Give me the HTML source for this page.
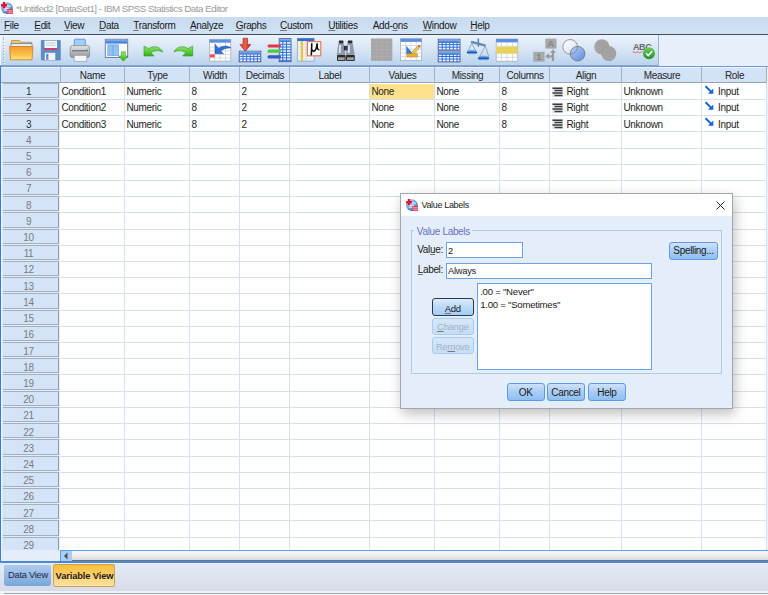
<!DOCTYPE html><html><head><meta charset="utf-8"><style>
*{margin:0;padding:0;box-sizing:border-box}
html,body{width:768px;height:595px;overflow:hidden;background:#fff;font-family:"Liberation Sans", sans-serif;font-size:10px;letter-spacing:-0.33px;color:#1e1e1e}
.a{position:absolute}
.t{position:absolute;white-space:nowrap;line-height:1}
u{text-decoration:underline;text-decoration-color:#777;text-underline-offset:1px}

</style></head><body>
<div class="a" style="left:0;top:0;width:768px;height:17px;background:#fff"></div>
<svg class="a" style="left:0;top:0" width="16" height="16" viewBox="0 0 16 16">
<defs><radialGradient id="tiG" cx="0.35" cy="0.3" r="0.75"><stop offset="0" stop-color="#c4e0f6"/><stop offset="0.6" stop-color="#6fa3da"/><stop offset="1" stop-color="#2f6ab8"/></radialGradient></defs>
<circle cx="6.9" cy="8.1" r="5.9" fill="url(#tiG)"/>
<path d="M6 6.2h5M4 8.4h5M4 10.2h3.5" stroke="#eaf3fb" stroke-width="0.9"/>
<path d="M1.1 4h5.9v2.4H1.1z M2.8 1.9h2.4v6.4H2.8z" fill="#e0143c"/>
<rect x="7.3" y="8.9" width="5.6" height="5.1" fill="#dc3050"/>
<path d="M7.3 10.6h5.6M7.3 12.3h5.6M9.2 9.8v4.2M11 9.8v4.2" stroke="#f3b8c4" stroke-width="0.6"/>
</svg>
<div class="t" style="left:16px;top:3.7px;font-size:9.8px;letter-spacing:-0.52px;color:#9c9c9c">*Untitled2 [DataSet1] - IBM SPSS Statistics Data Editor</div>
<div class="a" style="left:0;top:17px;width:768px;height:17px;background:linear-gradient(#c9dbf0,#d0e1f4)"></div>
<div class="a" style="left:0;top:34px;width:768px;height:1px;background:#454d58"></div>
<div class="t" style="left:4.0px;top:21.1px;color:#1a1a1a"><u>F</u>ile</div>
<div class="t" style="left:34.3px;top:21.1px;color:#1a1a1a"><u>E</u>dit</div>
<div class="t" style="left:64.0px;top:21.1px;color:#1a1a1a"><u>V</u>iew</div>
<div class="t" style="left:99.0px;top:21.1px;color:#1a1a1a"><u>D</u>ata</div>
<div class="t" style="left:133.3px;top:21.1px;color:#1a1a1a"><u>T</u>ransform</div>
<div class="t" style="left:190.0px;top:21.1px;color:#1a1a1a"><u>A</u>nalyze</div>
<div class="t" style="left:235.7px;top:21.1px;color:#1a1a1a"><u>G</u>raphs</div>
<div class="t" style="left:280.0px;top:21.1px;color:#1a1a1a"><u>C</u>ustom</div>
<div class="t" style="left:328.3px;top:21.1px;color:#1a1a1a"><u>U</u>tilities</div>
<div class="t" style="left:372.7px;top:21.1px;color:#1a1a1a">Add-<u>o</u>ns</div>
<div class="t" style="left:422.7px;top:21.1px;color:#1a1a1a"><u>W</u>indow</div>
<div class="t" style="left:470.3px;top:21.1px;color:#1a1a1a"><u>H</u>elp</div>
<div class="a" style="left:0;top:35px;width:768px;height:31px;background:#e6effa"></div>
<div class="a" style="left:0;top:35px;width:659px;height:30px;background:linear-gradient(#ecf3fb,#d4e3f4 55%,#b9d3ee);border-right:1px solid #9fb3cb"></div>
<div class="a" style="left:0;top:65px;width:659px;height:1px;background:#8ba6c6"></div>
<div class="a" style="left:0;top:35px;width:1px;height:30px;background:#f2f5f9"></div>
<div class="a" style="left:3px;top:36.5px;width:1px;height:1px;background:#98a6b6;box-shadow:1px 1px 0 #f4f8fc"></div>
<div class="a" style="left:3px;top:39.4px;width:1px;height:1px;background:#98a6b6;box-shadow:1px 1px 0 #f4f8fc"></div>
<div class="a" style="left:3px;top:42.2px;width:1px;height:1px;background:#98a6b6;box-shadow:1px 1px 0 #f4f8fc"></div>
<div class="a" style="left:3px;top:45.0px;width:1px;height:1px;background:#98a6b6;box-shadow:1px 1px 0 #f4f8fc"></div>
<div class="a" style="left:3px;top:47.9px;width:1px;height:1px;background:#98a6b6;box-shadow:1px 1px 0 #f4f8fc"></div>
<div class="a" style="left:3px;top:50.8px;width:1px;height:1px;background:#98a6b6;box-shadow:1px 1px 0 #f4f8fc"></div>
<div class="a" style="left:3px;top:53.6px;width:1px;height:1px;background:#98a6b6;box-shadow:1px 1px 0 #f4f8fc"></div>
<div class="a" style="left:3px;top:56.5px;width:1px;height:1px;background:#98a6b6;box-shadow:1px 1px 0 #f4f8fc"></div>
<div class="a" style="left:3px;top:59.3px;width:1px;height:1px;background:#98a6b6;box-shadow:1px 1px 0 #f4f8fc"></div>
<div class="a" style="left:3px;top:62.2px;width:1px;height:1px;background:#98a6b6;box-shadow:1px 1px 0 #f4f8fc"></div>
<svg class="a" style="left:0;top:0" width="768" height="66" viewBox="0 0 768 66">
<defs>
<linearGradient id="gFold" x1="0" y1="0" x2="0" y2="1"><stop offset="0" stop-color="#f59a2e"/><stop offset="0.6" stop-color="#fbc14c"/><stop offset="1" stop-color="#fde878"/></linearGradient>
<linearGradient id="gFoldB" x1="0" y1="0" x2="0" y2="1"><stop offset="0" stop-color="#fbd35c"/><stop offset="1" stop-color="#f0a030"/></linearGradient>
<linearGradient id="gGreen" x1="0" y1="0" x2="0" y2="1"><stop offset="0" stop-color="#8ee86a"/><stop offset="1" stop-color="#35b01c"/></linearGradient>
<linearGradient id="gBlueH" x1="0" y1="0" x2="0" y2="1"><stop offset="0" stop-color="#86b6f2"/><stop offset="1" stop-color="#2f6fd4"/></linearGradient>
<linearGradient id="gRed" x1="0" y1="0" x2="1" y2="0"><stop offset="0" stop-color="#e0302a"/><stop offset="0.5" stop-color="#f06050"/><stop offset="1" stop-color="#b01810"/></linearGradient>
<linearGradient id="gPrint" x1="0" y1="0" x2="0" y2="1"><stop offset="0" stop-color="#e8e8e8"/><stop offset="0.5" stop-color="#b9bcc0"/><stop offset="1" stop-color="#8d9196"/></linearGradient>
<linearGradient id="gC1" x1="0" y1="0" x2="1" y2="1"><stop offset="0" stop-color="#ffffff"/><stop offset="1" stop-color="#d6e0f2"/></linearGradient>
<linearGradient id="gC2" x1="0" y1="0" x2="1" y2="1"><stop offset="0" stop-color="#b4cdf5"/><stop offset="1" stop-color="#4f82e0"/></linearGradient>
<linearGradient id="gChk" x1="0" y1="0" x2="0" y2="1"><stop offset="0" stop-color="#6ccf5a"/><stop offset="1" stop-color="#21922a"/></linearGradient>
<linearGradient id="gPan" x1="0" y1="0" x2="0" y2="1"><stop offset="0" stop-color="#7fbaea"/><stop offset="0.5" stop-color="#3a7ad0"/><stop offset="1" stop-color="#d8f0fc"/></linearGradient>
</defs>
<!-- 1 open folder -->
<path d="M11.5 40.5h8l1.2 1.8h10.8v5h-20z" fill="url(#gFoldB)" stroke="#c98a32" stroke-width="0.8"/>
<rect x="11" y="43.5" width="21" height="3.5" fill="#dfeefa" stroke="#5a88c8" stroke-width="0.8"/>
<path d="M9.5 46.5h23.5l-1 13.3h-21.5z" fill="url(#gFold)" stroke="#d3842e" stroke-width="0.9"/>
<!-- 2 save -->
<path d="M41.3 40.5h19v19.5h-18.5l-0.5-0.5z" fill="#5a8dc6" stroke="#4a78b0" stroke-width="0.6"/>
<rect x="44.5" y="40.7" width="12.5" height="7.3" fill="#f4f7fb"/>
<path d="M46 43h9.5M46 45.3h9.5" stroke="#9aa7b6" stroke-width="0.6"/>
<rect x="44.5" y="48" width="12.5" height="1.8" fill="#d93a5e"/>
<rect x="44.8" y="52.8" width="10.5" height="7.2" fill="#f2f2f2"/>
<rect x="46.2" y="53.8" width="2.2" height="6" fill="#5a8dc6"/>
<!-- 3 printer -->
<rect x="74.3" y="39.2" width="11" height="7.5" rx="1" fill="#9fd0f8" stroke="#4b8ad6" stroke-width="0.8"/>
<rect x="70.2" y="45.6" width="19.4" height="12" rx="2.5" fill="url(#gPrint)" stroke="#7d8186" stroke-width="0.7"/>
<rect x="72" y="50.2" width="16" height="1.2" fill="#6d7176"/>
<circle cx="87.3" cy="49.8" r="0.8" fill="#2fd04a"/>
<rect x="74.2" y="55.3" width="12.6" height="6" fill="#f4f6f8" stroke="#9aa0a8" stroke-width="0.7"/>
<!-- 4 dialog recall -->
<rect x="105.3" y="39.3" width="22.4" height="18.2" fill="#fafcff" stroke="#6a6f9c" stroke-width="0.9"/>
<rect x="105.7" y="39.7" width="21.6" height="3.8" fill="url(#gBlueH)"/>
<rect x="107.8" y="44.8" width="4.6" height="11" fill="#8fc2ef" stroke="#5d9ee0" stroke-width="0.6"/>
<rect x="113" y="44.8" width="5.5" height="11" fill="#8fc2ef" stroke="#5d9ee0" stroke-width="0.6"/>
<path d="M121.2 51.8h4.2v4.2h2.6l-4.7 5.2-4.7-5.2h2.6z" fill="url(#gGreen)" stroke="#2a9a18" stroke-width="0.5"/>
<!-- 5 undo -->
<path d="M144 46L144 56L154 56L151 52.8C153.5 50.5 158 49.8 162.8 52C160.5 47.2 154.5 44.6 148.8 48.6Z" fill="url(#gGreen)" stroke="#2e9a1c" stroke-width="0.6" stroke-linejoin="round"/>
<!-- 6 redo -->
<path d="M192.7 46L192.7 56L182.7 56L185.7 52.8C183.2 50.5 178.7 49.8 173.9 52C176.2 47.2 182.2 44.6 187.9 48.6Z" fill="url(#gGreen)" stroke="#2e9a1c" stroke-width="0.6" stroke-linejoin="round"/>
<!-- 7 goto case -->
<rect x="209.5" y="39.5" width="21.3" height="21.6" fill="#fdfdfd" stroke="#9fa6ae" stroke-width="0.7"/>
<rect x="209.5" y="39.5" width="21.3" height="3.2" fill="#5c8fe0"/>
<path d="M209.5 47h21.3M209.5 50.8h21.3M209.5 54.4h21.3M209.5 58h21.3M214.8 42.7v18.4M220 42.7v18.4M225.5 42.7v18.4" stroke="#c9ced4" stroke-width="0.7"/>
<rect x="209.8" y="54.4" width="5" height="3" fill="#ef4a5a"/>
<path d="M215 44.2v9.5h8.5l-2.6-2.5c2.5-2.5 6-3.5 10.2-3.2-3.5-2.5-8-2.6-12.5 0.2l-3.6-4z" fill="#2f6fd4" stroke="#1e56b0" stroke-width="0.5"/>
<!-- 8 insert cases -->
<path d="M243 38.2h4.6v6.2h3.2l-5.5 7-5.5-7h3.2z" fill="url(#gRed)" stroke="#9a1a10" stroke-width="0.5"/>
<rect x="239.2" y="51.2" width="21.6" height="10.6" fill="#f4f8fd" stroke="#283c80" stroke-width="0.8"/>
<rect x="239.6" y="51.6" width="20.8" height="3" fill="url(#gBlueH)"/>
<path d="M239.5 56.4h21M239.5 59h21M243 54.6v7M246.6 54.6v7M250.2 54.6v7M253.8 54.6v7M257.4 54.6v7" stroke="#2f6fd4" stroke-width="1"/>
<!-- 9 insert variable -->
<rect x="279.2" y="38.7" width="11.8" height="23" fill="#e6f0fc" stroke="#2a3f8a" stroke-width="0.8"/>
<rect x="279.6" y="39.1" width="11" height="3" fill="url(#gBlueH)"/>
<path d="M282.8 42v19.5M286.5 42v19.5M279.5 44.3h11.5M279.5 47h11.5M279.5 49.7h11.5M279.5 52.4h11.5M279.5 55.1h11.5M279.5 57.8h11.5M279.5 60.3h11.5" stroke="#2f73d8" stroke-width="1"/>
<rect x="267.5" y="44.4" width="13.5" height="3.2" rx="1.5" fill="#e2344e"/>
<rect x="267.5" y="49.5" width="13.5" height="3.2" rx="1.5" fill="#4ccc3c"/>
<rect x="267.5" y="55.3" width="13.5" height="3.2" rx="1.5" fill="#3d55c8"/>
<!-- 10 mu -->
<rect x="297.3" y="38.3" width="16.8" height="22.8" fill="#f7f9fc" stroke="#7a90b8" stroke-width="0.7"/>
<rect x="297.5" y="38.3" width="16.6" height="2.8" fill="#2f6fd4"/>
<rect x="300.7" y="41.1" width="2.4" height="20" fill="#f2c21e"/>
<path d="M297.5 44h16.6M297.5 47h16.6M297.5 50h16.6M297.5 53h16.6M297.5 56h16.6M297.5 59h16.6M306 41v20" stroke="#c8ced8" stroke-width="0.7"/>
<rect x="307.4" y="41.6" width="13.4" height="14.2" fill="#fff" stroke="#ec7a50" stroke-width="1.2"/>
<path d="M311.8 43.8L311.3 54.8M311.6 48.5Q312 51.6 314.2 51.1Q316.4 50.2 317.1 43.8M317.1 44.2Q317.1 49.6 318.8 49.7" stroke="#111" stroke-width="1.6" fill="none" stroke-linecap="round"/>
<!-- 11 binoculars -->
<rect x="338.8" y="40.5" width="4.6" height="3.2" rx="0.6" fill="#2b2b2b"/>
<rect x="347.8" y="40.5" width="4.6" height="3.2" rx="0.6" fill="#2b2b2b"/>
<path d="M338.3 43.5h5.6l1.6 11.8h-8.8z" fill="#8e9aaa"/>
<path d="M347.3 43.5h5.6l1.8 11.8h-8.8z" fill="#8e9aaa"/>
<path d="M339.3 45h1.6l-0.3 8h-1.9z" fill="#e4eaf2"/>
<path d="M348.3 45h1.6l-0.3 8h-1.9z" fill="#e4eaf2"/>
<rect x="343.8" y="45.8" width="3.6" height="4.6" fill="#2a3040"/>
<rect x="346.6" y="46.2" width="0.8" height="3.8" fill="#3a50c0"/>
<rect x="337" y="55" width="8.6" height="6" rx="0.8" fill="#2b2b2b"/>
<rect x="346" y="55" width="8.8" height="6" rx="0.8" fill="#2b2b2b"/>
<rect x="338" y="57.3" width="6.6" height="2.8" fill="#a0a0a0"/>
<rect x="347" y="57.3" width="6.8" height="2.8" fill="#a0a0a0"/>
<!-- 12 gray grid -->
<rect x="371" y="38.5" width="21.3" height="22.3" fill="#a6a6a6"/>
<path d="M371 42.5h21.3M371 46h21.3M371 49.5h21.3M371 53h21.3M371 56.5h21.3M376.5 38.5v22.3M382 38.5v22.3M387 38.5v22.3" stroke="#b2b2b2" stroke-width="0.6"/>
<!-- 13 edit grid pencil -->
<rect x="400.5" y="38.7" width="21.2" height="21.8" fill="#fdfdfd" stroke="#9fa6ae" stroke-width="0.7"/>
<rect x="400.5" y="38.7" width="21.2" height="3.2" fill="#5c8fe0"/>
<path d="M400.5 45.5h21.2M400.5 49.2h21.2M400.5 52.8h21.2M400.5 56.5h21.2M405.7 42v18.5M411 42v18.5M416.3 42v18.5" stroke="#c9ced4" stroke-width="0.7"/>
<path d="M406.3 45.8v8.5h7z" fill="#3a78d8"/>
<path d="M411.5 52.5l6.5-6.8 1.8 1.8-6.5 6.8-2.6 0.8z" fill="#f2c84a" stroke="#8a6a2a" stroke-width="0.5"/>
<circle cx="419.3" cy="46.1" r="1.2" fill="#e05a5a"/>
<rect x="407" y="53.8" width="10.4" height="3.2" fill="#e8b030" stroke="#b08020" stroke-width="0.5"/>
<!-- 14 two tables -->
<rect x="438.2" y="39.2" width="21.8" height="10.8" fill="#f4f8fd" stroke="#283c80" stroke-width="0.8"/>
<rect x="438.6" y="39.6" width="21" height="3.4" fill="url(#gBlueH)"/>
<path d="M438.5 44.6h21.5M438.5 47.2h21.5M442.3 43v7M446 43v7M449.7 43v7M453.3 43v7M457 43v7" stroke="#2f6fd4" stroke-width="1"/>
<rect x="438.2" y="51.1" width="21.8" height="10.8" fill="#f4f8fd" stroke="#283c80" stroke-width="0.8"/>
<rect x="438.6" y="51.5" width="21" height="3.4" fill="url(#gBlueH)"/>
<path d="M438.5 56.5h21.5M438.5 59.1h21.5M442.3 55v7M446 55v7M449.7 55v7M453.3 55v7M457 55v7" stroke="#2f6fd4" stroke-width="1"/>
<!-- 15 scales -->
<rect x="477.6" y="38.5" width="1.5" height="8.2" fill="#4f82ac"/>
<path d="M471 41.8l14.6 3.8" stroke="#5a8ab2" stroke-width="2.4"/>
<path d="M471.8 43.5l-4.6 8.8M471.8 43.5l4.8 8.8M485.3 46l-6.3 11.8M485.3 46l3.8 11.8" stroke="#7090ae" stroke-width="0.7"/>
<ellipse cx="472" cy="52.5" rx="5.2" ry="2.7" fill="url(#gPan)"/>
<path d="M467.2 52.5h9.6" stroke="#1a50b0" stroke-width="1.2"/>
<ellipse cx="483.5" cy="58.4" rx="5.5" ry="3" fill="url(#gPan)"/>
<path d="M478.3 58.4h10.4" stroke="#1a50b0" stroke-width="1.3"/>
<!-- 16 yellow grid -->
<rect x="496.2" y="39" width="21.6" height="22.2" fill="#fdfdfd" stroke="#9fa6ae" stroke-width="0.7"/>
<rect x="496.2" y="39" width="21.6" height="3.4" fill="#5c8fe0"/>
<rect x="496.6" y="46.6" width="20.8" height="6.8" fill="#f7d22a"/>
<path d="M496.2 46.3h21.6M496.2 50h21.6M496.2 53.6h21.6M496.2 57.3h21.6M501.5 42.4v18.8M507 42.4v18.8M512.5 42.4v18.8" stroke="#c9ced4" stroke-width="0.7"/>
<!-- 17 value labels -->
<rect x="545.3" y="38.6" width="11.2" height="10" fill="#a8a8a8"/>
<text x="547.2" y="47.3" font-family="Liberation Sans" font-weight="bold" font-size="9.5" fill="#858585">A</text>
<rect x="533.2" y="51.8" width="11.4" height="9.9" fill="#a8a8a8"/>
<text x="536.2" y="60.3" font-family="Liberation Sans" font-weight="bold" font-size="9.5" fill="#858585">1</text>
<path d="M547.5 56.3h5.5M553 61v-9.5" stroke="#9a9a9a" stroke-width="2.2" fill="none"/>
<path d="M545.3 56.3l3.5-3v6z M553 49.3l-3 3.5h6z" fill="#9a9a9a"/>
<!-- 18 circles -->
<circle cx="570.2" cy="46.8" r="7.3" fill="url(#gC1)"/>
<circle cx="577.6" cy="53.7" r="7.3" fill="url(#gC2)" fill-opacity="0.9"/>
<circle cx="570.2" cy="46.8" r="7.3" fill="none" stroke="#808080" stroke-width="0.8"/>
<circle cx="577.6" cy="53.7" r="7.3" fill="none" stroke="#707070" stroke-width="0.8"/>
<!-- 19 gray circles -->
<circle cx="601.9" cy="46.9" r="7.6" fill="#a3a3a3"/>
<circle cx="608.8" cy="53.6" r="7.5" fill="#a3a3a3"/><path d="M601.5 54.5A7.5 7.5 0 0 1 609.5 46.1" stroke="#989898" stroke-width="0.6" fill="none"/>
<!-- 20 ABC -->
<text x="633" y="49.6" font-family="Liberation Sans" font-size="9" font-weight="bold" fill="#6a6a6a" letter-spacing="-0.4">ABC</text>
<path d="M632.5 52.3q1 -1 2 0t2 0t2 0t2 0t2 0" stroke="#e04a3a" stroke-width="0.8" fill="none"/>
<circle cx="649" cy="53.3" r="6" fill="url(#gChk)"/>
<path d="M646 53.2l2.2 2.3 4-4.2" stroke="#fff" stroke-width="1.6" fill="none"/>
</svg>

<div class="a" style="left:0;top:66px;width:768px;height:497px;background:#fff"></div>
<div class="a" style="left:0;top:66px;width:768px;height:1px;background:#6a9bd8"></div>
<div class="a" style="left:0;top:66px;width:1.5px;height:497px;background:#3e7fcf"></div>
<div class="a" style="left:767px;top:67px;width:1px;height:483px;background:#eef3f9"></div>
<div class="a" style="left:1px;top:67px;width:765px;height:16px;background:#d2e3f8;border-top:1px solid #f1f3f6;border-bottom:1px solid #97a5b5"></div>
<div class="a" style="left:60px;top:67px;width:1px;height:16px;background:#a6b1be"></div>
<div class="a" style="left:124px;top:67px;width:1px;height:16px;background:#a6b1be"></div>
<div class="t" style="left:60px;top:71.3px;width:65px;text-align:center;color:#262626">Name</div>
<div class="a" style="left:189px;top:67px;width:1px;height:16px;background:#a6b1be"></div>
<div class="t" style="left:125px;top:71.3px;width:65px;text-align:center;color:#262626">Type</div>
<div class="a" style="left:239px;top:67px;width:1px;height:16px;background:#a6b1be"></div>
<div class="t" style="left:190px;top:71.3px;width:50px;text-align:center;color:#262626">Width</div>
<div class="a" style="left:289px;top:67px;width:1px;height:16px;background:#a6b1be"></div>
<div class="t" style="left:240px;top:71.3px;width:50px;text-align:center;color:#262626">Decimals</div>
<div class="a" style="left:369px;top:67px;width:1px;height:16px;background:#a6b1be"></div>
<div class="t" style="left:290px;top:71.3px;width:80px;text-align:center;color:#262626">Label</div>
<div class="a" style="left:434px;top:67px;width:1px;height:16px;background:#a6b1be"></div>
<div class="t" style="left:370px;top:71.3px;width:65px;text-align:center;color:#262626">Values</div>
<div class="a" style="left:499px;top:67px;width:1px;height:16px;background:#a6b1be"></div>
<div class="t" style="left:435px;top:71.3px;width:65px;text-align:center;color:#262626">Missing</div>
<div class="a" style="left:549px;top:67px;width:1px;height:16px;background:#a6b1be"></div>
<div class="t" style="left:500px;top:71.3px;width:50px;text-align:center;color:#262626">Columns</div>
<div class="a" style="left:621px;top:67px;width:1px;height:16px;background:#a6b1be"></div>
<div class="t" style="left:550px;top:71.3px;width:72px;text-align:center;color:#262626">Align</div>
<div class="a" style="left:701px;top:67px;width:1px;height:16px;background:#a6b1be"></div>
<div class="t" style="left:622px;top:71.3px;width:80px;text-align:center;color:#262626">Measure</div>
<div class="a" style="left:766px;top:67px;width:1px;height:16px;background:#a6b1be"></div>
<div class="t" style="left:702px;top:71.3px;width:65px;text-align:center;color:#262626">Role</div>
<div class="a" style="left:1px;top:83px;width:59px;height:467px;background:#e4ecf5"></div>
<div class="a" style="left:3px;top:83px;width:56px;height:15px;background:#d3e4f9;border-right:1px solid #909dac;border-bottom:1px solid #a3b0bf;border-top:1px solid #a3b0bf"></div>
<div class="t" style="left:0px;top:87.1px;width:57px;text-align:center;color:#2b2b2b">1</div>
<div class="a" style="left:60px;top:99px;width:706px;height:1px;background:#d3e1f3"></div>
<div class="a" style="left:3px;top:99px;width:56px;height:15px;background:#d3e4f9;border-right:1px solid #909dac;border-bottom:1px solid #a3b0bf;border-top:1px solid #a3b0bf"></div>
<div class="t" style="left:0px;top:103.3px;width:57px;text-align:center;color:#2b2b2b">2</div>
<div class="a" style="left:60px;top:115px;width:706px;height:1px;background:#d3e1f3"></div>
<div class="a" style="left:3px;top:115px;width:56px;height:15px;background:#d3e4f9;border-right:1px solid #909dac;border-bottom:1px solid #a3b0bf;border-top:1px solid #a3b0bf"></div>
<div class="t" style="left:0px;top:119.5px;width:57px;text-align:center;color:#2b2b2b">3</div>
<div class="a" style="left:60px;top:131px;width:706px;height:1px;background:#d3e1f3"></div>
<div class="a" style="left:3px;top:131px;width:56px;height:16px;background:#d3e4f9;border-right:1px solid #909dac;border-bottom:1px solid #a3b0bf;border-top:1px solid #a3b0bf"></div>
<div class="t" style="left:0px;top:135.7px;width:57px;text-align:center;color:#7b7b7b">4</div>
<div class="a" style="left:60px;top:148px;width:706px;height:1px;background:#d3e1f3"></div>
<div class="a" style="left:3px;top:148px;width:56px;height:15px;background:#d3e4f9;border-right:1px solid #909dac;border-bottom:1px solid #a3b0bf;border-top:1px solid #a3b0bf"></div>
<div class="t" style="left:0px;top:151.9px;width:57px;text-align:center;color:#7b7b7b">5</div>
<div class="a" style="left:60px;top:164px;width:706px;height:1px;background:#d3e1f3"></div>
<div class="a" style="left:3px;top:164px;width:56px;height:15px;background:#d3e4f9;border-right:1px solid #909dac;border-bottom:1px solid #a3b0bf;border-top:1px solid #a3b0bf"></div>
<div class="t" style="left:0px;top:168.2px;width:57px;text-align:center;color:#7b7b7b">6</div>
<div class="a" style="left:60px;top:180px;width:706px;height:1px;background:#d3e1f3"></div>
<div class="a" style="left:3px;top:180px;width:56px;height:15px;background:#d3e4f9;border-right:1px solid #909dac;border-bottom:1px solid #a3b0bf;border-top:1px solid #a3b0bf"></div>
<div class="t" style="left:0px;top:184.4px;width:57px;text-align:center;color:#7b7b7b">7</div>
<div class="a" style="left:60px;top:196px;width:706px;height:1px;background:#d3e1f3"></div>
<div class="a" style="left:3px;top:196px;width:56px;height:15px;background:#d3e4f9;border-right:1px solid #909dac;border-bottom:1px solid #a3b0bf;border-top:1px solid #a3b0bf"></div>
<div class="t" style="left:0px;top:200.6px;width:57px;text-align:center;color:#7b7b7b">8</div>
<div class="a" style="left:60px;top:212px;width:706px;height:1px;background:#d3e1f3"></div>
<div class="a" style="left:3px;top:212px;width:56px;height:16px;background:#d3e4f9;border-right:1px solid #909dac;border-bottom:1px solid #a3b0bf;border-top:1px solid #a3b0bf"></div>
<div class="t" style="left:0px;top:216.8px;width:57px;text-align:center;color:#7b7b7b">9</div>
<div class="a" style="left:60px;top:229px;width:706px;height:1px;background:#d3e1f3"></div>
<div class="a" style="left:3px;top:229px;width:56px;height:15px;background:#d3e4f9;border-right:1px solid #909dac;border-bottom:1px solid #a3b0bf;border-top:1px solid #a3b0bf"></div>
<div class="t" style="left:0px;top:233.0px;width:57px;text-align:center;color:#7b7b7b">10</div>
<div class="a" style="left:60px;top:245px;width:706px;height:1px;background:#d3e1f3"></div>
<div class="a" style="left:3px;top:245px;width:56px;height:15px;background:#d3e4f9;border-right:1px solid #909dac;border-bottom:1px solid #a3b0bf;border-top:1px solid #a3b0bf"></div>
<div class="t" style="left:0px;top:249.2px;width:57px;text-align:center;color:#7b7b7b">11</div>
<div class="a" style="left:60px;top:261px;width:706px;height:1px;background:#d3e1f3"></div>
<div class="a" style="left:3px;top:261px;width:56px;height:15px;background:#d3e4f9;border-right:1px solid #909dac;border-bottom:1px solid #a3b0bf;border-top:1px solid #a3b0bf"></div>
<div class="t" style="left:0px;top:265.4px;width:57px;text-align:center;color:#7b7b7b">12</div>
<div class="a" style="left:60px;top:277px;width:706px;height:1px;background:#d3e1f3"></div>
<div class="a" style="left:3px;top:277px;width:56px;height:15px;background:#d3e4f9;border-right:1px solid #909dac;border-bottom:1px solid #a3b0bf;border-top:1px solid #a3b0bf"></div>
<div class="t" style="left:0px;top:281.6px;width:57px;text-align:center;color:#7b7b7b">13</div>
<div class="a" style="left:60px;top:293px;width:706px;height:1px;background:#d3e1f3"></div>
<div class="a" style="left:3px;top:293px;width:56px;height:16px;background:#d3e4f9;border-right:1px solid #909dac;border-bottom:1px solid #a3b0bf;border-top:1px solid #a3b0bf"></div>
<div class="t" style="left:0px;top:297.8px;width:57px;text-align:center;color:#7b7b7b">14</div>
<div class="a" style="left:60px;top:310px;width:706px;height:1px;background:#d3e1f3"></div>
<div class="a" style="left:3px;top:310px;width:56px;height:15px;background:#d3e4f9;border-right:1px solid #909dac;border-bottom:1px solid #a3b0bf;border-top:1px solid #a3b0bf"></div>
<div class="t" style="left:0px;top:314.0px;width:57px;text-align:center;color:#7b7b7b">15</div>
<div class="a" style="left:60px;top:326px;width:706px;height:1px;background:#d3e1f3"></div>
<div class="a" style="left:3px;top:326px;width:56px;height:15px;background:#d3e4f9;border-right:1px solid #909dac;border-bottom:1px solid #a3b0bf;border-top:1px solid #a3b0bf"></div>
<div class="t" style="left:0px;top:330.2px;width:57px;text-align:center;color:#7b7b7b">16</div>
<div class="a" style="left:60px;top:342px;width:706px;height:1px;background:#d3e1f3"></div>
<div class="a" style="left:3px;top:342px;width:56px;height:15px;background:#d3e4f9;border-right:1px solid #909dac;border-bottom:1px solid #a3b0bf;border-top:1px solid #a3b0bf"></div>
<div class="t" style="left:0px;top:346.5px;width:57px;text-align:center;color:#7b7b7b">17</div>
<div class="a" style="left:60px;top:358px;width:706px;height:1px;background:#d3e1f3"></div>
<div class="a" style="left:3px;top:358px;width:56px;height:15px;background:#d3e4f9;border-right:1px solid #909dac;border-bottom:1px solid #a3b0bf;border-top:1px solid #a3b0bf"></div>
<div class="t" style="left:0px;top:362.7px;width:57px;text-align:center;color:#7b7b7b">18</div>
<div class="a" style="left:60px;top:374px;width:706px;height:1px;background:#d3e1f3"></div>
<div class="a" style="left:3px;top:374px;width:56px;height:16px;background:#d3e4f9;border-right:1px solid #909dac;border-bottom:1px solid #a3b0bf;border-top:1px solid #a3b0bf"></div>
<div class="t" style="left:0px;top:378.9px;width:57px;text-align:center;color:#7b7b7b">19</div>
<div class="a" style="left:60px;top:391px;width:706px;height:1px;background:#d3e1f3"></div>
<div class="a" style="left:3px;top:391px;width:56px;height:15px;background:#d3e4f9;border-right:1px solid #909dac;border-bottom:1px solid #a3b0bf;border-top:1px solid #a3b0bf"></div>
<div class="t" style="left:0px;top:395.1px;width:57px;text-align:center;color:#7b7b7b">20</div>
<div class="a" style="left:60px;top:407px;width:706px;height:1px;background:#d3e1f3"></div>
<div class="a" style="left:3px;top:407px;width:56px;height:15px;background:#d3e4f9;border-right:1px solid #909dac;border-bottom:1px solid #a3b0bf;border-top:1px solid #a3b0bf"></div>
<div class="t" style="left:0px;top:411.3px;width:57px;text-align:center;color:#7b7b7b">21</div>
<div class="a" style="left:60px;top:423px;width:706px;height:1px;background:#d3e1f3"></div>
<div class="a" style="left:3px;top:423px;width:56px;height:15px;background:#d3e4f9;border-right:1px solid #909dac;border-bottom:1px solid #a3b0bf;border-top:1px solid #a3b0bf"></div>
<div class="t" style="left:0px;top:427.5px;width:57px;text-align:center;color:#7b7b7b">22</div>
<div class="a" style="left:60px;top:439px;width:706px;height:1px;background:#d3e1f3"></div>
<div class="a" style="left:3px;top:439px;width:56px;height:16px;background:#d3e4f9;border-right:1px solid #909dac;border-bottom:1px solid #a3b0bf;border-top:1px solid #a3b0bf"></div>
<div class="t" style="left:0px;top:443.7px;width:57px;text-align:center;color:#7b7b7b">23</div>
<div class="a" style="left:60px;top:456px;width:706px;height:1px;background:#d3e1f3"></div>
<div class="a" style="left:3px;top:456px;width:56px;height:15px;background:#d3e4f9;border-right:1px solid #909dac;border-bottom:1px solid #a3b0bf;border-top:1px solid #a3b0bf"></div>
<div class="t" style="left:0px;top:459.9px;width:57px;text-align:center;color:#7b7b7b">24</div>
<div class="a" style="left:60px;top:472px;width:706px;height:1px;background:#d3e1f3"></div>
<div class="a" style="left:3px;top:472px;width:56px;height:15px;background:#d3e4f9;border-right:1px solid #909dac;border-bottom:1px solid #a3b0bf;border-top:1px solid #a3b0bf"></div>
<div class="t" style="left:0px;top:476.1px;width:57px;text-align:center;color:#7b7b7b">25</div>
<div class="a" style="left:60px;top:488px;width:706px;height:1px;background:#d3e1f3"></div>
<div class="a" style="left:3px;top:488px;width:56px;height:15px;background:#d3e4f9;border-right:1px solid #909dac;border-bottom:1px solid #a3b0bf;border-top:1px solid #a3b0bf"></div>
<div class="t" style="left:0px;top:492.3px;width:57px;text-align:center;color:#7b7b7b">26</div>
<div class="a" style="left:60px;top:504px;width:706px;height:1px;background:#d3e1f3"></div>
<div class="a" style="left:3px;top:504px;width:56px;height:15px;background:#d3e4f9;border-right:1px solid #909dac;border-bottom:1px solid #a3b0bf;border-top:1px solid #a3b0bf"></div>
<div class="t" style="left:0px;top:508.6px;width:57px;text-align:center;color:#7b7b7b">27</div>
<div class="a" style="left:60px;top:520px;width:706px;height:1px;background:#d3e1f3"></div>
<div class="a" style="left:3px;top:520px;width:56px;height:16px;background:#d3e4f9;border-right:1px solid #909dac;border-bottom:1px solid #a3b0bf;border-top:1px solid #a3b0bf"></div>
<div class="t" style="left:0px;top:524.8px;width:57px;text-align:center;color:#7b7b7b">28</div>
<div class="a" style="left:60px;top:537px;width:706px;height:1px;background:#d3e1f3"></div>
<div class="a" style="left:3px;top:537px;width:56px;height:15px;background:#d3e4f9;border-right:1px solid #909dac;border-bottom:1px solid #a3b0bf;border-top:1px solid #a3b0bf"></div>
<div class="t" style="left:0px;top:541.0px;width:57px;text-align:center;color:#7b7b7b">29</div>
<div class="a" style="left:60px;top:553px;width:706px;height:1px;background:#d3e1f3"></div>
<div class="a" style="left:124px;top:83px;width:1px;height:467px;background:#d3e1f3"></div>
<div class="a" style="left:189px;top:83px;width:1px;height:467px;background:#d3e1f3"></div>
<div class="a" style="left:239px;top:83px;width:1px;height:467px;background:#d3e1f3"></div>
<div class="a" style="left:289px;top:83px;width:1px;height:467px;background:#d3e1f3"></div>
<div class="a" style="left:369px;top:83px;width:1px;height:467px;background:#d3e1f3"></div>
<div class="a" style="left:434px;top:83px;width:1px;height:467px;background:#d3e1f3"></div>
<div class="a" style="left:499px;top:83px;width:1px;height:467px;background:#d3e1f3"></div>
<div class="a" style="left:549px;top:83px;width:1px;height:467px;background:#d3e1f3"></div>
<div class="a" style="left:621px;top:83px;width:1px;height:467px;background:#d3e1f3"></div>
<div class="a" style="left:701px;top:83px;width:1px;height:467px;background:#d3e1f3"></div>
<div class="a" style="left:766px;top:83px;width:1px;height:467px;background:#d3e1f3"></div>
<div class="a" style="left:370px;top:84px;width:64px;height:15px;background:#fde28e"></div>
<div class="t" style="left:61.4px;top:87.1px">Condition1</div>
<div class="t" style="left:126.4px;top:87.1px">Numeric</div>
<div class="t" style="left:191.4px;top:87.1px">8</div>
<div class="t" style="left:241.4px;top:87.1px">2</div>
<div class="t" style="left:371.4px;top:87.1px">None</div>
<div class="t" style="left:436.4px;top:87.1px">None</div>
<div class="t" style="left:501.4px;top:87.1px">8</div>
<svg class="a" style="left:552px;top:86.5px" width="11" height="10" viewBox="0 0 11 10"><rect x="0" y="0" width="11" height="10" fill="#e6ebf0"/><path d="M0.5 1.2h10M2.5 3.6h8M0.5 6h10M2.5 8.4h8" stroke="#3a3a3a" stroke-width="1.5"/></svg>
<div class="t" style="left:566.4px;top:87.1px">Right</div>
<div class="t" style="left:623.4px;top:87.1px">Unknown</div>
<svg class="a" style="left:703.5px;top:84.9px" width="11" height="10" viewBox="0 0 11 10"><path d="M1.5 1.2L8 7.5" stroke="#1862e0" stroke-width="1.9"/><path d="M4 8.8h5.3v-5.3z" fill="#1862e0"/></svg>
<div class="t" style="left:718px;top:87.1px">Input</div>
<div class="t" style="left:61.4px;top:103.3px">Condition2</div>
<div class="t" style="left:126.4px;top:103.3px">Numeric</div>
<div class="t" style="left:191.4px;top:103.3px">8</div>
<div class="t" style="left:241.4px;top:103.3px">2</div>
<div class="t" style="left:371.4px;top:103.3px">None</div>
<div class="t" style="left:436.4px;top:103.3px">None</div>
<div class="t" style="left:501.4px;top:103.3px">8</div>
<svg class="a" style="left:552px;top:102.7px" width="11" height="10" viewBox="0 0 11 10"><rect x="0" y="0" width="11" height="10" fill="#e6ebf0"/><path d="M0.5 1.2h10M2.5 3.6h8M0.5 6h10M2.5 8.4h8" stroke="#3a3a3a" stroke-width="1.5"/></svg>
<div class="t" style="left:566.4px;top:103.3px">Right</div>
<div class="t" style="left:623.4px;top:103.3px">Unknown</div>
<svg class="a" style="left:703.5px;top:101.1px" width="11" height="10" viewBox="0 0 11 10"><path d="M1.5 1.2L8 7.5" stroke="#1862e0" stroke-width="1.9"/><path d="M4 8.8h5.3v-5.3z" fill="#1862e0"/></svg>
<div class="t" style="left:718px;top:103.3px">Input</div>
<div class="t" style="left:61.4px;top:119.5px">Condition3</div>
<div class="t" style="left:126.4px;top:119.5px">Numeric</div>
<div class="t" style="left:191.4px;top:119.5px">8</div>
<div class="t" style="left:241.4px;top:119.5px">2</div>
<div class="t" style="left:371.4px;top:119.5px">None</div>
<div class="t" style="left:436.4px;top:119.5px">None</div>
<div class="t" style="left:501.4px;top:119.5px">8</div>
<svg class="a" style="left:552px;top:118.9px" width="11" height="10" viewBox="0 0 11 10"><rect x="0" y="0" width="11" height="10" fill="#e6ebf0"/><path d="M0.5 1.2h10M2.5 3.6h8M0.5 6h10M2.5 8.4h8" stroke="#3a3a3a" stroke-width="1.5"/></svg>
<div class="t" style="left:566.4px;top:119.5px">Right</div>
<div class="t" style="left:623.4px;top:119.5px">Unknown</div>
<svg class="a" style="left:703.5px;top:117.3px" width="11" height="10" viewBox="0 0 11 10"><path d="M1.5 1.2L8 7.5" stroke="#1862e0" stroke-width="1.9"/><path d="M4 8.8h5.3v-5.3z" fill="#1862e0"/></svg>
<div class="t" style="left:718px;top:119.5px">Input</div>
<div class="a" style="left:1px;top:550px;width:767px;height:12px;background:#e4edf9"></div>
<div class="a" style="left:60px;top:550px;width:708px;height:11px;background:linear-gradient(#f6f6f7,#eeeef0 50%,#d9dadd);border-top:1px solid #5aa0f0;border-left:1px solid #5aa0f0;border-bottom:1px solid #6c7278"></div>
<div class="a" style="left:61px;top:551px;width:10.5px;height:10px;background:#a9cdf5"></div>
<svg class="a" style="left:63px;top:552px" width="6" height="8"><path d="M4.5 0.5v7L1 4z" fill="#4a4f55"/></svg>
<div class="a" style="left:0;top:561px;width:768px;height:2px;background:#4a89d6"></div>
<div class="a" style="left:0;top:563px;width:768px;height:28px;background:linear-gradient(#e3ebf7,#d8dae7)"></div>
<div class="a" style="left:4.3px;top:564.8px;width:47px;height:21.5px;border-radius:1px 1px 3px 3px;background:linear-gradient(#aecbed,#78a7dc)"></div>
<div class="t" style="left:8px;top:571px;font-size:9.3px;letter-spacing:-0.25px;color:#1d2a44">Data View</div>
<div class="a" style="left:53px;top:564px;width:62.3px;height:23px;border-radius:2px;background:linear-gradient(#fbbd35,#fde2a3);border:1px solid #c9a35a"></div>
<div class="t" style="left:55.6px;top:572px;font-size:9.3px;font-weight:bold;letter-spacing:-0.12px;color:#1d1d1d">Variable View</div>
<div class="a" style="left:0;top:591px;width:768px;height:2px;background:#edf3fb"></div>
<div class="a" style="left:4px;top:593px;width:764px;height:2px;background:#f3f6fa;border-top:1px solid #a3a8ae"></div>
<div class="a" style="left:0;top:593px;width:4px;height:2px;background:#edf3fb"></div>
<div class="a" style="left:400px;top:193px;width:333px;height:215.6px;background:#e4eefa;border:1px solid #a0a6ae;box-shadow:2px 5px 12px rgba(0,0,0,0.25)"></div>
<div class="a" style="left:401px;top:194px;width:331px;height:22px;background:#fff"></div>
<svg class="a" style="left:405px;top:196.5px" width="16" height="16" viewBox="0 0 16 16">
<circle cx="6.9" cy="8.1" r="5.9" fill="url(#tiG)"/>
<path d="M6 6.2h5M4 8.4h5M4 10.2h3.5" stroke="#eaf3fb" stroke-width="0.9"/>
<path d="M1.1 4h5.9v2.4H1.1z M2.8 1.9h2.4v6.4H2.8z" fill="#e0143c"/>
<rect x="7.3" y="8.9" width="5.6" height="5.1" fill="#dc3050"/>
<path d="M7.3 10.6h5.6M7.3 12.3h5.6M9.2 9.8v4.2M11 9.8v4.2" stroke="#f3b8c4" stroke-width="0.6"/>
</svg>
<div class="t" style="left:421.4px;top:201.3px;font-size:9px;color:#1a1a1a">Value Labels</div>
<svg class="a" style="left:715px;top:200px" width="11" height="11" viewBox="0 0 11 11"><path d="M1.5 1.5l8 8M9.5 1.5l-8 8" stroke="#2a2a2a" stroke-width="1"/></svg>
<!-- group box -->
<div class="a" style="left:411px;top:230px;width:311px;height:144px;border:1px solid #b2c9e8"></div>
<div class="a" style="left:414px;top:226px;width:58px;height:10px;background:#e4eefa"></div>
<div class="t" style="left:416.8px;top:227.2px;color:#6a6fc2">Value Labels</div>
<!-- value -->
<div class="t" style="left:417.2px;top:245px;color:#1a1a1a">Val<u>u</u>e:</div>
<div class="a" style="left:446px;top:242px;width:77px;height:16px;background:#fff;border:1px solid #6aa2e2"></div>
<div class="t" style="left:448px;top:246.8px;font-size:9.3px;color:#1a1a1a">2</div>
<div class="a" style="left:669px;top:241.5px;width:49px;height:18px;border-radius:3px;background:linear-gradient(#cfe2f8,#a9cdf5 50%,#8fbff2);border:1px solid #5a9ae6"></div>
<div class="t" style="left:669px;top:246.2px;width:49px;text-align:center;color:#1a1a1a">Spelling...</div>
<!-- label -->
<div class="t" style="left:417.7px;top:264.8px;color:#1a1a1a"><u>L</u>abel:</div>
<div class="a" style="left:446px;top:262.5px;width:205.5px;height:16px;background:#fff;border:1px solid #6aa2e2"></div>
<div class="t" style="left:448px;top:266.8px;font-size:9.3px;letter-spacing:-0.25px;color:#1a1a1a">Always</div>
<!-- list -->
<div class="a" style="left:477px;top:282.5px;width:174.5px;height:87px;background:#fff;border:1px solid #6aa2e2"></div>
<div class="t" style="left:480.2px;top:286.6px;font-size:9.6px;letter-spacing:-0.25px;color:#1a1a1a">.00 = "Never"</div>
<div class="t" style="left:480.2px;top:299.6px;font-size:9.6px;letter-spacing:-0.25px;color:#1a1a1a">1.00 = "Sometimes"</div>
<!-- add/change/remove -->
<div class="a" style="left:431.5px;top:298.3px;width:42.5px;height:17.5px;border-radius:3px;background:linear-gradient(#dcebfb,#bcd9f7 50%,#a4cdf6);border:1px solid #2c3a4c"></div>
<div class="t" style="left:431.5px;top:303.5px;width:42.5px;text-align:center;font-size:9.5px;color:#1a1a1a"><u>A</u>dd</div>
<div class="a" style="left:431.5px;top:317.5px;width:42.5px;height:17px;border-radius:3px;background:linear-gradient(#d6e7fa,#c3ddf8);border:1px solid #a9cbf0"></div>
<div class="t" style="left:431.5px;top:322.3px;width:42.5px;text-align:center;font-size:9.5px;color:#a9b2bd"><u>C</u>hange</div>
<div class="a" style="left:431.5px;top:336.7px;width:42.5px;height:17px;border-radius:3px;background:linear-gradient(#d6e7fa,#c3ddf8);border:1px solid #a9cbf0"></div>
<div class="t" style="left:431.5px;top:341.5px;width:42.5px;text-align:center;font-size:9.5px;color:#a9b2bd">Re<u>m</u>ove</div>
<!-- ok cancel help -->
<div class="a" style="left:507px;top:383px;width:37.5px;height:17.8px;border-radius:3px;background:linear-gradient(#cfe2f8,#a9cdf5 50%,#8fbff2);border:1px solid #5a9ae6"></div>
<div class="t" style="left:507px;top:388px;width:37.5px;text-align:center;color:#1a1a1a">OK</div>
<div class="a" style="left:547px;top:383px;width:37.8px;height:17.8px;border-radius:3px;background:linear-gradient(#cfe2f8,#a9cdf5 50%,#8fbff2);border:1px solid #5a9ae6"></div>
<div class="t" style="left:547px;top:388px;width:37.8px;text-align:center;color:#1a1a1a">Cancel</div>
<div class="a" style="left:588px;top:383px;width:37.8px;height:17.8px;border-radius:3px;background:linear-gradient(#cfe2f8,#a9cdf5 50%,#8fbff2);border:1px solid #5a9ae6"></div>
<div class="t" style="left:588px;top:388px;width:37.8px;text-align:center;color:#1a1a1a">Help</div>

</body></html>
